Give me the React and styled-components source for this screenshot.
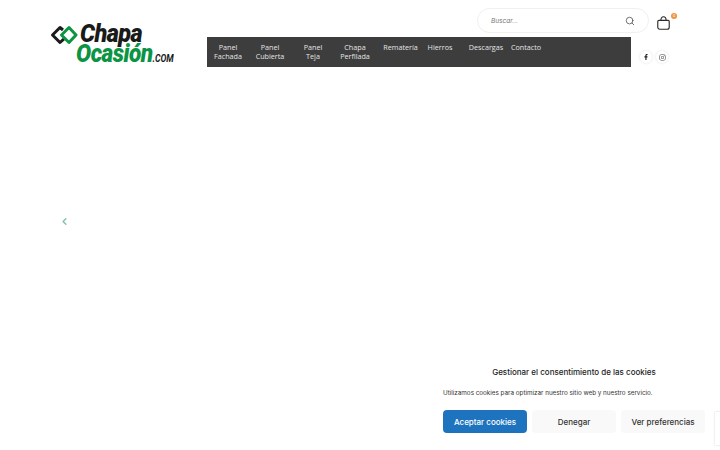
import React from "react";
import styled, { createGlobalStyle } from "styled-components";
import { FaFacebookF, FaInstagram } from "react-icons/fa";
import { FiSearch, FiChevronLeft } from "react-icons/fi";

const GlobalStyle = createGlobalStyle`
  html, body {
    margin: 0;
    padding: 0;
    background: #fff;
    overflow: hidden;
  }
  body {
    font-family: "Inter", "Liberation Sans", sans-serif;
  }
`;

const NAV_ITEMS = [
  { label: ["Panel", "Fachada"], width: 42 },
  { label: ["Panel", "Cubierta"], width: 42 },
  { label: ["Panel", "Teja"], width: 44 },
  { label: ["Chapa", "Perfilada"], width: 40 },
  { label: ["Rematería"], width: 51 },
  { label: ["Hierros"], width: 28 },
  { label: ["Descargas"], width: 44, offset: 10 },
  { label: ["Contacto"], width: 36 },
];

const Logo = () => (
  <LogoWrap>
    <LogoMark viewBox="0 0 28 20" aria-hidden="true">
      <path
        d="M13 5 L10 2.500 L2.500 10 L10 17.500 L14 13.800"
        fill="none"
        stroke="#1b1b1b"
        strokeWidth="3"
        strokeLinejoin="round"
      />
      <path
        d="M19 2.500 L26 10 L19 17.500 L11.500 10 Z"
        fill="none"
        stroke="#0b9444"
        strokeWidth="3"
        strokeLinejoin="round"
      />
    </LogoMark>
    <LogoText>
      <LogoChapa>Chapa</LogoChapa>
      <LogoOcasion>
        Ocasión<LogoCom>.COM</LogoCom>
      </LogoOcasion>
    </LogoText>
  </LogoWrap>
);

const CartIcon = () => (
  <svg width="13" height="14" viewBox="0 0 15 16" fill="none" stroke="#2a2a2a" strokeWidth="1.3">
    <path d="M2.200 5h10.600c.8 0 1.300.6 1.300 1.300v6.600c0 1.300-1 2.300-2.300 2.300H3.200C1.900 15.200.9 14.200.9 12.900V6.300C.9 5.600 1.400 5 2.200 5z" />
    <path d="M4.500 5c0-2.500 1-4.200 3-4.200s3 1.700 3 4.200" />
  </svg>
);

export default function App() {
  return (
    <Page>
      <GlobalStyle />
      <Header>
        <Logo />
        <HeaderMain>
          <TopRow>
            <SearchBox>
              <SearchPlaceholder>Buscar...</SearchPlaceholder>
              <FiSearch size={10} color="#555" />
            </SearchBox>
            <Cart>
              <CartIcon />
              <CartBadge>0</CartBadge>
            </Cart>
          </TopRow>
          <BottomRow>
            <Nav>
              {NAV_ITEMS.map((item) => (
                <NavItem key={item.label.join(" ")} $width={item.width} $offset={item.offset}>
                  {item.label.map((line) => (
                    <div key={line}>{line}</div>
                  ))}
                </NavItem>
              ))}
            </Nav>
            <Socials>
              <SocialLink>
                <FaFacebookF size={6} color="#222" />
              </SocialLink>
              <SocialLink>
                <FaInstagram size={7} color="#444" />
              </SocialLink>
            </Socials>
          </BottomRow>
        </HeaderMain>
      </Header>

      <Hero>
        <FiChevronLeft size={11} color="#84bdb4" strokeWidth={3} />
      </Hero>

      <CookieBanner>
        <CookieTitle>Gestionar el consentimiento de las cookies</CookieTitle>
        <CookieText>Utilizamos cookies para optimizar nuestro sitio web y nuestro servicio.</CookieText>
        <CookieButtons>
          <CookieButton $primary>Aceptar cookies</CookieButton>
          <CookieButton>Denegar</CookieButton>
          <CookieButton>Ver preferencias</CookieButton>
        </CookieButtons>
      </CookieBanner>
      <RecaptchaBadge />
    </Page>
  );
}

const Page = styled.div`
  position: relative;
  width: 720px;
  height: 450px;
  overflow: hidden;
  background: #fff;
`;

const Header = styled.header`
  display: flex;
  align-items: flex-start;
  padding: 8px 0 0 50px;
`;

const LogoWrap = styled.div`
  display: flex;
  align-items: flex-start;
  width: 157px;
  height: 59px;
  padding-top: 16px;
  box-sizing: border-box;
`;

const LogoMark = styled.svg`
  width: 28px;
  height: 20px;
  flex: none;
  margin-top: 1px;
`;

const LogoText = styled.div`
  font-family: "Roboto", "Liberation Sans", sans-serif;
  font-style: italic;
  font-weight: 900;
  white-space: nowrap;
  margin-left: 2px;
`;

const LogoChapa = styled.div`
  color: #1a1a1a;
  font-size: 25px;
  line-height: 20px;
  letter-spacing: -0.6px;
  transform: scaleX(0.94);
  transform-origin: left center;
`;

const LogoOcasion = styled.div`
  color: #0b9444;
  font-size: 26px;
  line-height: 19px;
  margin-left: -4px;
  letter-spacing: -0.6px;
  transform: scaleX(0.87);
  transform-origin: left center;
`;

const LogoCom = styled.span`
  color: #1a1a1a;
  font-size: 10px;
  letter-spacing: 0;
  font-weight: 700;
`;

const HeaderMain = styled.div`
  display: flex;
  flex-direction: column;
  width: 470px;
`;

const TopRow = styled.div`
  display: flex;
  justify-content: flex-end;
  align-items: center;
  gap: 7px;
  height: 25px;
  margin-bottom: 4px;
`;

const SearchBox = styled.div`
  display: flex;
  align-items: center;
  justify-content: space-between;
  width: 172px;
  height: 25px;
  box-sizing: border-box;
  padding: 0 13px 0 13px;
  border: 1px solid #f0f0f0;
  border-radius: 13px;
  background: #fff;
`;

const SearchPlaceholder = styled.span`
  font-size: 6.5px;
  font-style: italic;
  color: #777;
`;

const Cart = styled.div`
  position: relative;
  display: flex;
  align-items: center;
  box-sizing: border-box;
  width: 21px;
  height: 25px;
  padding: 4px 0 0 1px;
`;

const CartBadge = styled.span`
  position: absolute;
  top: 5px;
  right: 0;
  width: 6px;
  height: 6px;
  border-radius: 50%;
  background: #f0913a;
  color: #fff;
  font-size: 4px;
  line-height: 6px;
  text-align: center;
`;

const BottomRow = styled.div`
  display: flex;
  align-items: flex-start;
`;

const Nav = styled.nav`
  display: flex;
  width: 424px;
  height: 30px;
  box-sizing: border-box;
  padding-top: 6px;
  background: #3d3d3d;
`;

const NavItem = styled.div`
  width: ${(p) => p.$width}px;
  margin-left: ${(p) => p.$offset || 0}px;
  flex: none;
  display: flex;
  flex-direction: column;
  align-items: center;
  font-family: "Open Sans", "Liberation Sans", sans-serif;
  font-size: 7.2px;
  line-height: 9px;
  color: #e4e4e4;
  white-space: nowrap;
`;

const Socials = styled.div`
  display: flex;
  gap: 4px;
  margin: 14px 0 0 9px;
`;

const SocialLink = styled.a`
  display: flex;
  align-items: center;
  justify-content: center;
  width: 12px;
  height: 12px;
  border-radius: 50%;
  background: #fff;
  box-shadow: 0 0 3px rgba(0, 0, 0, 0.12);
`;

const Hero = styled.section`
  display: flex;
  align-items: center;
  height: 308px;
  padding-left: 59px;
`;

const CookieBanner = styled.aside`
  position: absolute;
  left: 430px;
  top: 355px;
  width: 290px;
  height: 95px;
  box-sizing: border-box;
  padding: 11px 15px 0 13px;
  background: #fff;
  font-family: "Inter", "Liberation Sans", sans-serif;
`;

const CookieTitle = styled.div`
  font-size: 8px;
  line-height: 12px;
  font-weight: 500;
  color: #222;
  text-align: center;
`;

const CookieText = styled.p`
  margin: 10px 0 0;
  font-size: 6.3px;
  line-height: 10px;
  color: #333;
  white-space: nowrap;
`;

const CookieButtons = styled.div`
  display: grid;
  grid-template-columns: repeat(3, 84px);
  gap: 5px;
  margin-top: 12px;
`;

const CookieButton = styled.button`
  height: 23px;
  padding: 0;
  border: 0;
  border-radius: 4px;
  font-family: inherit;
  font-size: 8px;
  font-weight: 500;
  background: ${(p) => (p.$primary ? "#1e73be" : "#f9f9f9")};
  color: ${(p) => (p.$primary ? "#fff" : "#333")};
`;

const RecaptchaBadge = styled.div`
  position: absolute;
  left: 715px;
  top: 412px;
  width: 30px;
  height: 33px;
  background: #fff;
  box-shadow: 0 0 2px rgba(0, 0, 0, 0.18);
`;
